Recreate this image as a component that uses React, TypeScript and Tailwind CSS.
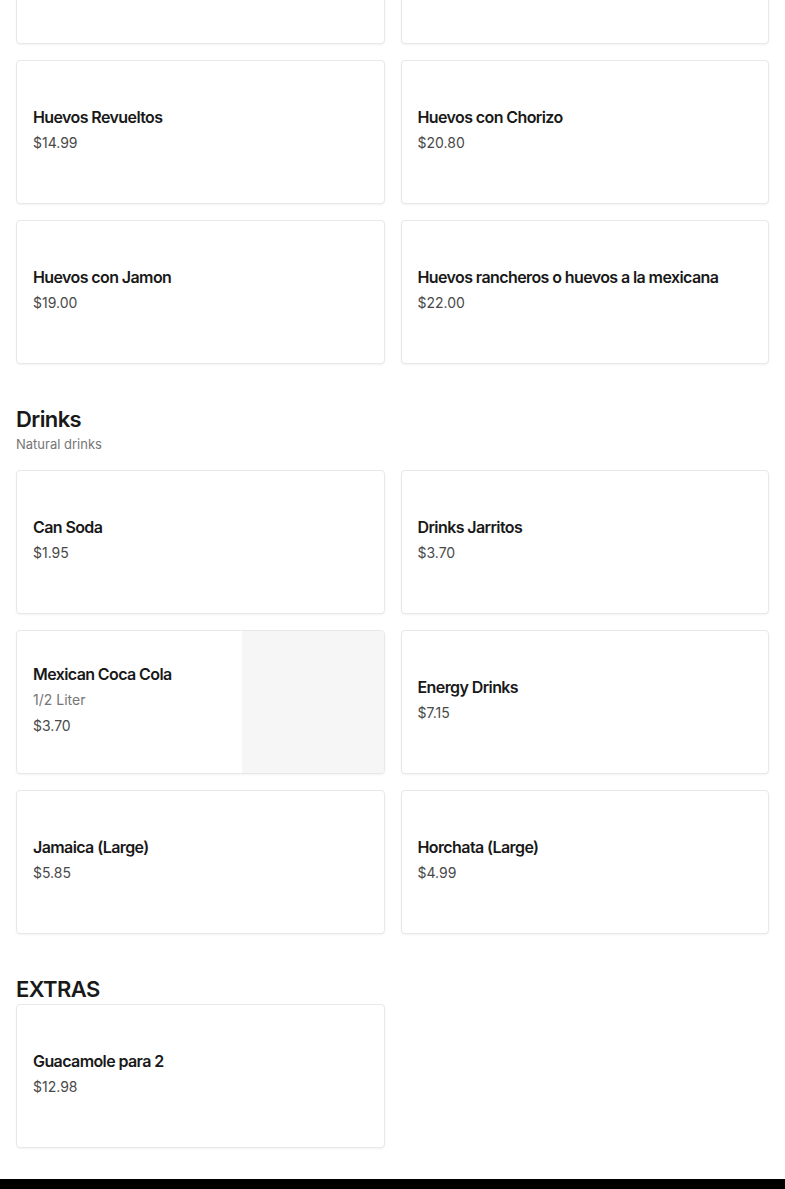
type MenuItem = {
  name: string;
  price: string;
  description?: string;
  image?: boolean;
};

type Section = {
  title: string;
  subtitle?: string;
  items: MenuItem[];
};

const FONT = { fontFamily: "Inter, 'Noto Sans', sans-serif" };

// first row is scrolled past the top of the view
const breakfast: (MenuItem | null)[] = [
  null,
  null,
  { name: "Huevos Revueltos", price: "$14.99" },
  { name: "Huevos con Chorizo", price: "$20.80" },
  { name: "Huevos con Jamon", price: "$19.00" },
  { name: "Huevos rancheros o huevos a la mexicana", price: "$22.00" },
];

const sections: Section[] = [
  {
    title: "Drinks",
    subtitle: "Natural drinks",
    items: [
      { name: "Can Soda", price: "$1.95" },
      { name: "Drinks Jarritos", price: "$3.70" },
      {
        name: "Mexican Coca Cola",
        description: "1/2 Liter",
        price: "$3.70",
        image: true,
      },
      { name: "Energy Drinks", price: "$7.15" },
      { name: "Jamaica (Large)", price: "$5.85" },
      { name: "Horchata (Large)", price: "$4.99" },
    ],
  },
  {
    title: "EXTRAS",
    items: [{ name: "Guacamole para 2", price: "$12.98" }],
  },
];

function ItemCard({ item }: { item: MenuItem | null }) {
  return (
    <div className="flex h-[144px] overflow-hidden rounded border border-[#e8e8e8] bg-white shadow-[0_1px_2px_rgba(0,0,0,0.05)]">
      {item && (
        <div className="flex flex-1 flex-col justify-center px-4 pb-1">
          <p className="text-[16px] font-semibold leading-6 tracking-[-0.6px] text-[#191919]">
            {item.name}
          </p>
          {item.description && (
            <p className="mt-0.5 text-[14px] leading-6 text-[#767676]">
              {item.description}
            </p>
          )}
          <p className="mt-0.5 text-[14px] leading-6 text-[#494949]">{item.price}</p>
        </div>
      )}
      {item?.image && <div className="w-[142px] bg-[#f6f6f6]" />}
    </div>
  );
}

export default function App() {
  return (
    <div className="min-h-screen overflow-hidden bg-white" style={FONT}>
      <div className="-mt-[100px] grid grid-cols-2 gap-4 px-4">
        {breakfast.map((item, i) => (
          <ItemCard key={i} item={item} />
        ))}
      </div>

      {sections.map((section) => (
        <section key={section.title} className="mt-10 px-4">
          <h2 className="text-[22px] font-semibold leading-[30px] tracking-[-0.6px] text-[#191919]">
            {section.title}
          </h2>
          {section.subtitle && (
            <p className="mb-4 text-[13px] leading-5 text-[#767676]">
              {section.subtitle}
            </p>
          )}
          <div className="grid grid-cols-2 gap-4">
            {section.items.map((item) => (
              <ItemCard key={item.name} item={item} />
            ))}
          </div>
        </section>
      ))}

      <footer className="mt-[31px] h-[200px] bg-black" />
    </div>
  );
}
